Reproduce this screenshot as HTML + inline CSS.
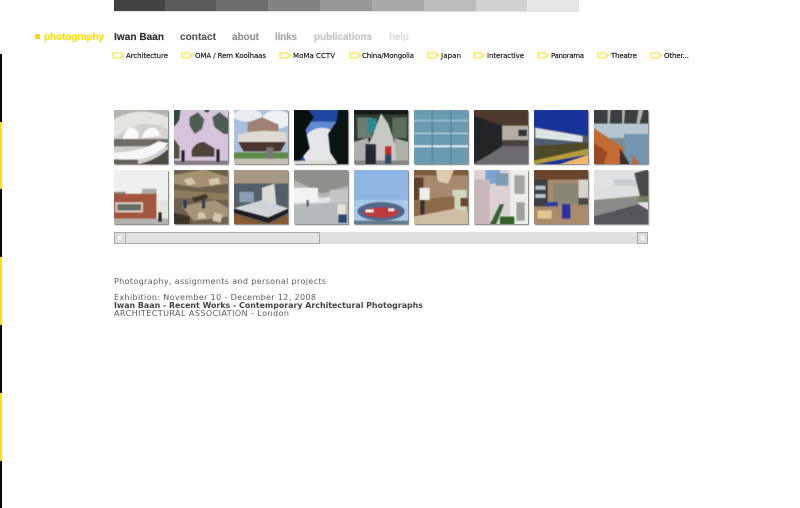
<!DOCTYPE html>
<html><head><meta charset="utf-8"><title>Iwan Baan</title>
<style>
html,body{margin:0;padding:0;background:#fff;width:800px;height:508px;overflow:hidden}
body{position:relative;font-family:"DejaVu Sans","Liberation Sans",sans-serif}
.a{position:absolute}
.t{position:absolute;width:54px;height:54px;box-shadow:1px 1px 1px #777;overflow:hidden}
.t svg{display:block;filter:blur(.6px);transform:scale(1.03)}
#ov{position:absolute;left:0;top:0;filter:blur(.25px)}
</style></head><body>
<div class="a" style="left:114px;top:11px;width:465px;height:1px;background:#e4e4e4"></div>
<div class="a" style="left:114px;top:0;width:51px;height:11px;background:#434345"></div>
<div class="a" style="left:165px;top:0;width:51px;height:11px;background:#5a5a5c"></div>
<div class="a" style="left:216px;top:0;width:52px;height:11px;background:#6d6d70"></div>
<div class="a" style="left:268px;top:0;width:52px;height:11px;background:#838386"></div>
<div class="a" style="left:320px;top:0;width:52px;height:11px;background:#98989b"></div>
<div class="a" style="left:372px;top:0;width:52px;height:11px;background:#a9a9ac"></div>
<div class="a" style="left:424px;top:0;width:52px;height:11px;background:#bcbcbe"></div>
<div class="a" style="left:476px;top:0;width:51px;height:11px;background:#d1d1d3"></div>
<div class="a" style="left:527px;top:0;width:52px;height:11px;background:#e6e6e8"></div>

<div class="a" style="left:0;top:54px;width:2px;height:68px;background:#0a0a0a"></div>
<div class="a" style="left:0;top:122px;width:2px;height:67px;background:#ffdd00"></div>
<div class="a" style="left:0;top:189px;width:2px;height:68px;background:#0a0a0a"></div>
<div class="a" style="left:0;top:257px;width:2px;height:68px;background:#ffdd00"></div>
<div class="a" style="left:0;top:325px;width:2px;height:68px;background:#0a0a0a"></div>
<div class="a" style="left:0;top:393px;width:2px;height:68px;background:#ffdd00"></div>
<div class="a" style="left:0;top:461px;width:2px;height:47px;background:#0a0a0a"></div>

<div class="a" style="left:35px;top:34px;width:5px;height:5px;background:#ffdd00"></div>

<svg id="ov" width="800" height="508" xmlns="http://www.w3.org/2000/svg">
<g font-family="Liberation Sans" font-weight="bold" font-size="10" stroke-width=".15">
<text x="44" y="40" fill="#ffdd00" stroke="#ffdd00" textLength="60">photography</text>
<text x="114" y="40" fill="#2e2e30" stroke="#2e2e30" textLength="50">Iwan Baan</text>
<text x="180" y="40" fill="#58585a" stroke="#58585a" textLength="36">contact</text>
<text x="232" y="40" fill="#939395" stroke="#939395" textLength="27">about</text>
<text x="275" y="40" fill="#a9a9ab" stroke="#a9a9ab" textLength="22">links</text>
<text x="314" y="40" fill="#c4c4c6" stroke="#c4c4c6" textLength="58">publications</text>
<text x="389" y="40" fill="#dcdcde" stroke="#dcdcde" textLength="20">help</text>
</g>
<g fill="none" stroke="#ffdc1e" stroke-width="1.1">
<path d="M113 53h7l3.500 2.500-3.500 2.500h-7z"/>
<path d="M182 53h7l3.500 2.500-3.500 2.500h-7z"/>
<path d="M280 53h7l3.500 2.500-3.500 2.500h-7z"/>
<path d="M350 53h7l3.500 2.500-3.500 2.500h-7z"/>
<path d="M428 53h7l3.500 2.500-3.500 2.500h-7z"/>
<path d="M474 53h7l3.500 2.500-3.500 2.500h-7z"/>
<path d="M538 53h7l3.500 2.500-3.500 2.500h-7z"/>
<path d="M598 53h7l3.500 2.500-3.500 2.500h-7z"/>
<path d="M651 53h7l3.500 2.500-3.500 2.500h-7z"/>
</g>
<g font-family="DejaVu Sans" font-size="7" fill="#111" stroke="#111" stroke-width=".15">
<text x="126" y="58" textLength="42">Architecture</text>
<text x="195" y="58" textLength="71">OMA / Rem Koolhaas</text>
<text x="293" y="58" textLength="42">MoMa CCTV</text>
<text x="362" y="58" textLength="52">China/Mongolia</text>
<text x="441" y="58" textLength="20">Japan</text>
<text x="487" y="58" textLength="37">Interactive</text>
<text x="551" y="58" textLength="33">Panorama</text>
<text x="611" y="58" textLength="26">Theatre</text>
<text x="664" y="58" textLength="25">Other...</text>
</g>
<g font-family="DejaVu Sans" font-size="8" fill="#5c5c5e">
<text x="114" y="284" textLength="212">Photography, assignments and personal projects</text>
<text x="114" y="300" textLength="202">Exhibition: November 10 - December 12, 2008</text>
<text x="114" y="308" textLength="309" font-weight="bold" fill="#444446" lengthAdjust="spacingAndGlyphs">Iwan Baan - Recent Works - Contemporary Architectural Photographs</text>
<text x="114" y="316" textLength="175">ARCHITECTURAL ASSOCIATION - London</text>
</g>
</svg>

<!-- row 1 -->
<div class="t" style="left:114px;top:110px"><svg width="54" height="54" viewBox="0 0 54 54"><rect width="54" height="54" fill="#cfcfcb"/><rect y="0" width="54" height="10" fill="#b5b5b0"/><path d="M0 10Q26 -4 54 8V20Q30 6 0 28z" fill="#e4e4e0"/><path d="M8 32Q12 18 18 18Q26 20 26 30zM28 28Q30 18 38 18Q44 18 46 26z" fill="#fafafa"/><rect x="24" y="14" width="3" height="16" fill="#d5d5d0"/><rect x="46" y="14" width="3" height="16" fill="#d5d5d0"/><rect y="29" width="54" height="7" fill="#6f6c66"/><path d="M0 42Q26 42 44 31L54 33Q38 50 12 50L0 47z" fill="#f7f7f7"/><path d="M22 54Q42 50 54 38V54z" fill="#4d4a44"/><rect y="49" width="24" height="5" fill="#66635c"/></svg></div>
<div class="t" style="left:174px;top:110px"><svg width="54" height="54" viewBox="0 0 54 54"><rect width="54" height="54" fill="#d5c4dc"/><path d="M0 0h7L6 10 2 16H0z" fill="#2f4a3c"/><path d="M16 8l8-5 6 7-2 9-7 5-5-8z" fill="#4c5d50"/><path d="M38 8l7-5 9 7v14l-5 0-9-7z" fill="#4a5d52"/><path d="M18 46V40Q22 32 30 32L40 38V46z" fill="#4c4436"/><path d="M0 28l6 8V48H0z" fill="#57503f"/><rect y="50" width="54" height="4" fill="#877a85"/><rect x="8" y="40" width="3" height="11" fill="#222"/><rect x="42" y="39" width="3" height="12" fill="#222"/><path d="M30 0h6l-2 3h-3z" fill="#2f4a3c"/></svg></div>
<div class="t" style="left:234px;top:110px"><svg width="54" height="54" viewBox="0 0 54 54"><rect width="54" height="54" fill="#a8c0dc"/><ellipse cx="14" cy="6" rx="14" ry="6" fill="#e8edf2"/><ellipse cx="42" cy="10" rx="14" ry="9" fill="#eef1f4"/><path d="M14 13l14-5 16 7v10H14z" fill="#a08070"/><path d="M4 25Q26 18 52 23V32H5z" fill="#ded9d2"/><path d="M5 32H51L46 41H10z" fill="#4c352c"/><rect y="42" width="54" height="6" fill="#5d8a45"/><rect y="48" width="54" height="6" fill="#c4bfb2"/><rect x="32" y="37" width="7" height="11" fill="#777"/></svg></div>
<div class="t" style="left:294px;top:110px"><svg width="54" height="54" viewBox="0 0 54 54"><rect width="54" height="54" fill="#1f47a0"/><rect y="12" width="54" height="24" fill="#5f88ce"/><ellipse cx="28" cy="38" rx="20" ry="20" fill="#e4e6ea"/><path d="M0 0H14L20 8 12 20 16 38 6 50H0z" fill="#08100c"/><path d="M54 0H44L42 12 34 24 36 42 44 54H54z" fill="#0a1410"/><rect y="50" width="42" height="4" fill="#dbd9d0"/></svg></div>
<div class="t" style="left:354px;top:110px"><svg width="54" height="54" viewBox="0 0 54 54"><rect width="54" height="54" fill="#2f3d34"/><rect width="54" height="5" fill="#141a16"/><rect x="4" y="8" width="14" height="20" fill="#6c7e70"/><rect x="38" y="8" width="14" height="20" fill="#5c6e5e"/><rect x="14" y="9" width="9" height="14" fill="#2e8a92"/><path d="M27 4L34 14 46 50H6L18 28z" fill="#c8c8c4"/><path d="M0 32L14 28 20 50H0zM40 28L54 32V50H42z" fill="#b0b0aa"/><rect y="50" width="54" height="4" fill="#858585"/><rect x="12" y="34" width="10" height="20" fill="#242830"/><rect x="31" y="36" width="6" height="8" fill="#c32a2a"/><rect x="31" y="44" width="6" height="9" fill="#33456c"/></svg></div>
<div class="t" style="left:414px;top:110px"><svg width="54" height="54" viewBox="0 0 54 54"><rect width="54" height="54" fill="#6a9bb2"/><rect y="10" width="54" height="2" fill="#9abaca"/><rect y="23" width="54" height="1" fill="#d4e0e6"/><rect y="35" width="54" height="2" fill="#e8eef0"/><rect x="18" width="1" height="54" fill="#4f7f96"/><rect x="36" width="1" height="54" fill="#4f7f96"/></svg></div>
<div class="t" style="left:474px;top:110px"><svg width="54" height="54" viewBox="0 0 54 54"><rect width="54" height="54" fill="#49433f"/><path d="M0 0H54V20L28 22 0 6z" fill="#4e3a2c"/><path d="M28 16H54V30H28z" fill="#b4ada5"/><path d="M0 6L28 16V38L0 52z" fill="#232425"/><path d="M0 54L28 36H54V54z" fill="#6c6c70"/><rect x="44" y="20" width="8" height="6" fill="#333"/></svg></div>
<div class="t" style="left:534px;top:110px"><svg width="54" height="54" viewBox="0 0 54 54"><rect width="54" height="54" fill="#17329a"/><path d="M0 17L54 26V38L0 36z" fill="#4e5e70"/><path d="M2 18L48 26V32L2 28z" fill="#dfe4e4"/><path d="M0 36L54 32V44L0 50z" fill="#4d4a28"/><path d="M0 50L54 38V44L0 54z" fill="#b49c3c"/><path d="M24 54L54 44V54z" fill="#efb868"/></svg></div>
<div class="t" style="left:594px;top:110px"><svg width="54" height="54" viewBox="0 0 54 54"><rect width="54" height="54" fill="#7e8a92"/><rect width="54" height="14" fill="#3a3f42"/><path d="M14 0h3l-1 14h-2zM28 0h3l-1 14h-2zM44 0h5l-4 14h-3z" fill="#b8b5a8"/><rect y="14" width="54" height="14" fill="#b5c6d0"/><rect x="30" y="24" width="24" height="30" fill="#7296b0"/><path d="M0 18L30 38 28 54H0z" fill="#c46a34"/><path d="M0 32L14 42 10 54H0z" fill="#9a4a22"/><path d="M26 38L36 54H26z" fill="#38302e"/><path d="M38 44L46 54H38z" fill="#bd6632"/></svg></div>

<!-- row 2 -->
<div class="t" style="left:114px;top:170px"><svg width="54" height="54" viewBox="0 0 54 54"><rect width="54" height="54" fill="#eef0f0"/><rect x="0" y="22" width="12" height="4" fill="#8a8a86"/><rect x="28" y="19" width="14" height="7" fill="#aaa"/><path d="M0 24H42V48H0z" fill="#a3553e"/><rect x="2" y="32" width="27" height="10" fill="#d8d2c6"/><rect x="4" y="34" width="23" height="6" fill="#6a6a68"/><rect x="42" y="30" width="12" height="18" fill="#e4e4e2"/><rect y="48" width="54" height="6" fill="#b3b1ac"/><rect x="44" y="42" width="3" height="9" fill="#222"/></svg></div>
<div class="t" style="left:174px;top:170px"><svg width="54" height="54" viewBox="0 0 54 54"><rect width="54" height="54" fill="#70614e"/><path d="M0 6L30 0 54 8V14L24 18 0 14z" fill="#a5906f"/><path d="M0 20L54 24V30L0 28z" fill="#8f7b5c"/><path d="M8 36L40 30 54 38V46L20 50z" fill="#a89478"/><path d="M0 42L16 46V54H0z" fill="#3e3428"/><path d="M34 10l10-2 2 6-10 2zM10 10l8-2 4 6-8 2zM40 42l8 2-2 8-8-2zM24 42l6 0 2 6-8 0z" fill="#d3c5ac"/><path d="M18 28l14-4 2 4-14 4z" fill="#3e3428"/><rect x="10" y="30" width="3" height="8" fill="#2d3c5a"/><rect x="28" y="28" width="3" height="10" fill="#2d3c5a"/></svg></div>
<div class="t" style="left:234px;top:170px"><svg width="54" height="54" viewBox="0 0 54 54"><rect width="54" height="54" fill="#6b5a46"/><path d="M0 0H54V14H0z" fill="#a79785"/><rect y="14" width="54" height="22" fill="#53606a"/><path d="M28 18L40 14 42 36H28z" fill="#dedbd3"/><rect x="6" y="22" width="14" height="10" fill="#8aa0b2"/><path d="M0 38L28 30 54 38 34 47z" fill="#cfd5d8"/><path d="M0 38L34 47 54 38V42L34 52 0 42z" fill="#1c1d22"/><path d="M0 44L30 54H0zM54 44V54H36z" fill="#8b5a30"/></svg></div>
<div class="t" style="left:294px;top:170px"><svg width="54" height="54" viewBox="0 0 54 54"><rect width="54" height="54" fill="#e2e3e2"/><path d="M0 0H54V16L28 24 0 10z" fill="#8f8f8c"/><path d="M0 10L28 24 54 16V22L28 28 0 18z" fill="#b5b5b0"/><rect x="36" y="20" width="18" height="18" fill="#c5c6c4"/><rect x="0" y="18" width="24" height="14" fill="#f2f3f2"/><path d="M0 34L54 32V54H0z" fill="#b5babc"/><rect x="43" y="34" width="8" height="11" fill="#e8e4d8"/><rect x="44" y="44" width="8" height="8" fill="#2d4870"/><rect x="13" y="30" width="2" height="6" fill="#555"/></svg></div>
<div class="t" style="left:354px;top:170px"><svg width="54" height="54" viewBox="0 0 54 54"><rect width="54" height="54" fill="#8fb5e4"/><rect y="30" width="54" height="24" fill="#a9c8ea"/><ellipse cx="27" cy="41" rx="23" ry="9" fill="#52688a"/><ellipse cx="27" cy="42" rx="17" ry="5" fill="#c0393e"/><path d="M12 39h8v3h-8zM34 38h6v3h-6z" fill="#eeeeee"/><rect y="50" width="54" height="4" fill="#627a8a"/></svg></div>
<div class="t" style="left:414px;top:170px"><svg width="54" height="54" viewBox="0 0 54 54"><rect width="54" height="54" fill="#a5896c"/><rect width="54" height="6" fill="#7e5d3c"/><path d="M22 0H40L34 14 24 12z" fill="#dccbb0"/><rect x="38" y="20" width="14" height="22" fill="#cfd6c0"/><rect x="0" y="8" width="10" height="22" fill="#5f4028"/><path d="M0 30L40 26V42L0 46z" fill="#8d6a48"/><rect x="6" y="18" width="10" height="12" fill="#eeeeea"/><rect x="7" y="30" width="4" height="14" fill="#333"/><path d="M0 46L42 38 54 42V54H0z" fill="#cdbda4"/><rect x="46" y="28" width="8" height="8" fill="#6e4624"/></svg></div>
<div class="t" style="left:474px;top:170px"><svg width="54" height="54" viewBox="0 0 54 54"><rect width="54" height="54" fill="#dcd2d4"/><rect x="12" width="14" height="14" fill="#7ca2d0"/><rect x="22" y="4" width="12" height="12" fill="#7d9cb0"/><rect x="0" y="10" width="16" height="44" fill="#c9b6b8"/><rect x="36" width="18" height="54" fill="#eeeee9"/><rect x="40" y="6" width="10" height="18" fill="#a5a59e"/><rect x="42" y="32" width="8" height="18" fill="#9ea39a"/><path d="M16 54L26 34H30L22 54z" fill="#35602e"/><path d="M26 46H40V54H26z" fill="#35602e"/></svg></div>
<div class="t" style="left:534px;top:170px"><svg width="54" height="54" viewBox="0 0 54 54"><rect width="54" height="54" fill="#a58a6e"/><rect width="54" height="10" fill="#6a452c"/><rect x="0" y="10" width="14" height="26" fill="#3c4046"/><rect x="2" y="16" width="10" height="4" fill="#b9c2c8"/><rect x="2" y="24" width="10" height="4" fill="#b9c2c8"/><rect x="20" y="14" width="24" height="20" fill="#8a8676"/><rect x="44" y="10" width="10" height="20" fill="#d6d4cc"/><rect x="44" y="28" width="10" height="12" fill="#4c4a48"/><path d="M0 38L54 34V54H0z" fill="#a98c6c"/><rect x="4" y="40" width="14" height="8" fill="#e0c58c"/><rect x="28" y="34" width="8" height="14" fill="#2b30a0"/><rect x="12" y="32" width="12" height="4" fill="#2b3f9a"/></svg></div>
<div class="t" style="left:594px;top:170px"><svg width="54" height="54" viewBox="0 0 54 54"><rect width="54" height="54" fill="#dfe1e2"/><rect x="20" y="10" width="24" height="18" fill="#c8ced2"/><rect x="0" y="16" width="54" height="14" fill="#dde0e0"/><path d="M0 30L44 26V34L0 46z" fill="#8b8b88"/><path d="M0 46L44 34 54 40V54H0z" fill="#55555a"/><path d="M40 4L54 0V26L46 28z" fill="#4a4a48"/><rect x="44" y="26" width="10" height="6" fill="#6e7e5c"/></svg></div>

<!-- scrollbar -->
<div class="a" style="left:114px;top:232px;width:534px;height:12px;background:#e0e0e0"></div>
<div class="a" style="left:114px;top:232px;width:10px;height:10px;background:#dedede;border:1px solid #a8a8a8"></div>
<div class="a" style="left:118px;top:236px;width:3px;height:4px;background:#f4f4f4"></div>
<div class="a" style="left:125px;top:232px;width:193px;height:10px;background:#e2e2e2;border:1px solid #a8a8a8"></div>
<div class="a" style="left:637px;top:232px;width:9px;height:10px;background:#dedede;border:1px solid #a8a8a8"></div>
<div class="a" style="left:641px;top:236px;width:3px;height:4px;background:#f4f4f4"></div>
</body></html>
